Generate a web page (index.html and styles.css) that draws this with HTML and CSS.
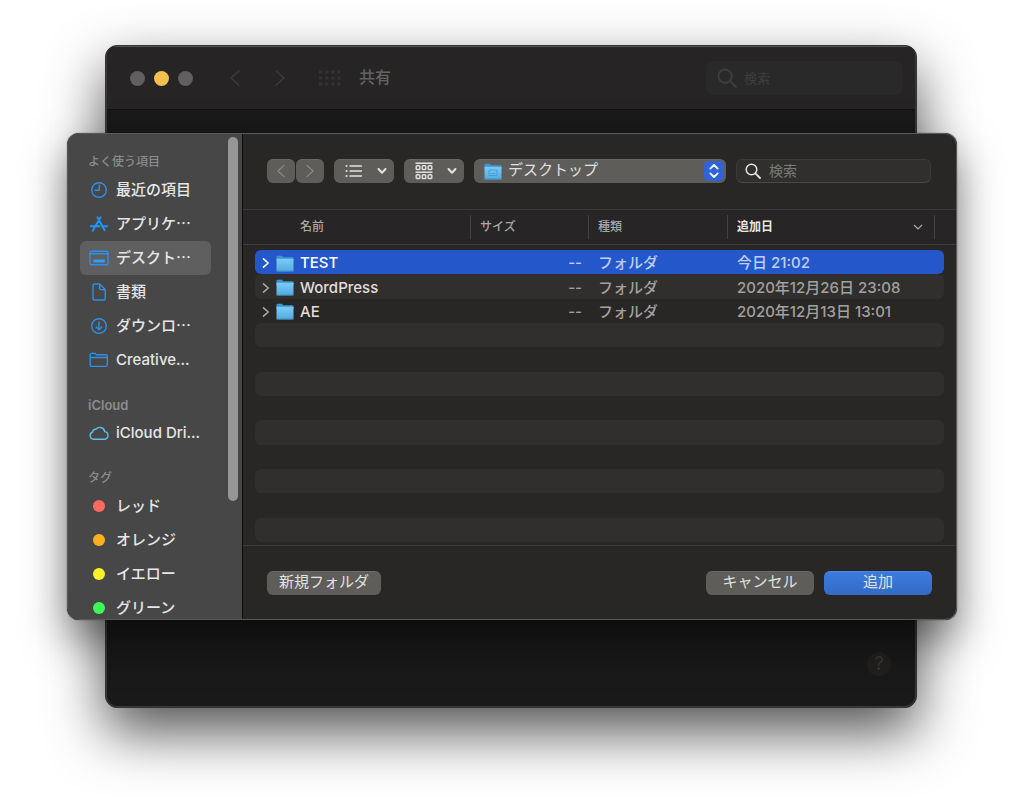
FILE: index.html
```html
<!DOCTYPE html>
<html lang="ja">
<head>
<meta charset="utf-8">
<meta name="viewport" content="width=device-width, initial-scale=1">
<title>共有</title>
<link rel="stylesheet" href="styles.css">
</head>
<body>
<svg class="defs" aria-hidden="true">
  <defs>
    <linearGradient id="folder-fill" x1="0" y1="0" x2="0" y2="1">
      <stop offset="0" stop-color="#7acbf8"/>
      <stop offset="1" stop-color="#54aadf"/>
    </linearGradient>
    <symbol id="folder" viewBox="0 0 18 17">
      <path d="M0.5 2a1.2 1.2 0 0 1 1.2-1.2h4.100l1.500 1.400h9a1.200 1.200 0 0 1 1.200 1.200V6H.5z" fill="#3c97cf"/>
      <path d="M.5 3.800h17v11.600a1 1 0 0 1-1 1h-15a1 1 0 0 1-1-1z" fill="url(#folder-fill)"/>
      <path d="M.6 15.900h16.800" stroke="#3d8fc4" stroke-width=".8"/>
    </symbol>
    <symbol id="search" viewBox="0 0 16 16">
      <circle cx="6.500" cy="6.500" r="5.300" fill="none" stroke="currentColor" stroke-width="1.500"/>
      <path d="M10.400 10.400l4.600 4.600" stroke="currentColor" stroke-width="1.800" stroke-linecap="round"/>
    </symbol>
    <symbol id="left" viewBox="0 0 10 16"><path d="M8.500 1.500L1.500 8l7 6.500" fill="none" stroke="currentColor" stroke-width="1.300" stroke-linecap="round" stroke-linejoin="round"/></symbol>
    <symbol id="right" viewBox="0 0 10 16"><path d="M1.500 1.500L8.500 8l-7 6.500" fill="none" stroke="currentColor" stroke-width="1.300" stroke-linecap="round" stroke-linejoin="round"/></symbol>
    <symbol id="disclose" viewBox="0 0 8 12"><path d="M1.500 1.800L6.200 6 1.500 10.200" fill="none" stroke="currentColor" stroke-width="1.600" stroke-linecap="round" stroke-linejoin="round"/></symbol>
    <symbol id="down" viewBox="0 0 10 8"><path d="M1.500 2L5 5.700 8.500 2" fill="none" stroke="currentColor" stroke-width="2" stroke-linecap="round" stroke-linejoin="round"/></symbol>
  </defs>
</svg>

<main class="window">
  <header class="titlebar">
    <div class="lights">
      <button class="light" aria-label="閉じる"></button>
      <button class="light light-min" aria-label="しまう"></button>
      <button class="light" aria-label="拡大"></button>
    </div>
    <button class="nav nav-back" aria-label="戻る"><svg width="12" height="18"><use href="#left"/></svg></button>
    <button class="nav nav-next" aria-label="進む"><svg width="12" height="18"><use href="#right"/></svg></button>
    <button class="nav nav-all" aria-label="すべてを表示">
      <svg width="22" height="16" viewBox="0 0 22 16" fill="none" stroke="currentColor" stroke-width="3" stroke-dasharray="3.400 2.700"><path d="M0 2h22M0 8h22M0 14h22"/></svg>
    </button>
    <h1 class="title">共有</h1>
    <label class="win-search">
      <svg width="20" height="20"><use href="#search"/></svg>
      <input type="search" placeholder="検索" aria-label="検索" disabled>
    </label>
  </header>
  <button class="help" aria-label="ヘルプ">?</button>
</main>

<section class="dialog" role="dialog" aria-label="フォルダを選択">
  <nav class="sidebar">
    <h2 class="group">よく使う項目</h2>
    <a class="item" href="#"><svg class="ico" viewBox="0 0 20 18"><circle cx="10" cy="9" r="7.300"/><path d="M10.300 4.300v4.900H6"/></svg>最近の項目</a>
    <a class="item" href="#"><svg class="ico ico-app" viewBox="0 0 20 18"><path d="M11.600 2.300L5 13.500M8.400 2.300l7.200 12.900M1.900 11.300h8.600M14.300 11.300h3.800M4.200 14.800l-.5.900"/></svg>アプリケ⋯</a>
    <a class="item item-on" href="#" aria-current="page"><svg class="ico" viewBox="0 0 20 18"><rect x="1" y="2.200" width="18" height="13.600" rx="1.500"/><path d="M1 4.700h18"/><rect class="solid" x="4.200" y="10.600" width="11.600" height="3" rx=".8"/></svg>デスクト⋯</a>
    <a class="item" href="#"><svg class="ico" viewBox="0 0 20 18"><path d="M5.500 1h5.200l5.500 5.500v9a1.500 1.500 0 0 1-1.500 1.500H5.500A1.500 1.500 0 0 1 4 15.500v-13A1.500 1.500 0 0 1 5.500 1zM10.600 1v4.600a1 1 0 0 0 1 1h4.600"/></svg>書類</a>
    <a class="item" href="#"><svg class="ico" viewBox="0 0 20 18"><circle cx="10" cy="9" r="7.300"/><path d="M10 5v7.500M7.200 9.900l2.800 2.800 2.800-2.800"/></svg>ダウンロ⋯</a>
    <a class="item" href="#"><svg class="ico" viewBox="0 0 20 18"><path d="M1.200 14V3.800a1.400 1.400 0 0 1 1.400-1.400h3.300l1.700 1.400h9.300a1.400 1.400 0 0 1 1.400 1.400V14a1.400 1.400 0 0 1-1.400 1.400H2.600A1.400 1.400 0 0 1 1.200 14zM1.200 6.500h17.100"/></svg>Creative...</a>
    <h2 class="group group-latin">iCloud</h2>
    <a class="item" href="#"><svg class="ico ico-cloud" viewBox="0 0 20 18"><path d="M4.600 15.200a3.700 3.700 0 0 1-.9-7.200 2.600 2.600 0 0 1 3.200-2.600 4.900 4.900 0 0 1 8.800 2.200 3.850 3.850 0 0 1 0 7.600z"/></svg>iCloud Dri...</a>
    <h2 class="group">タグ</h2>
    <a class="item" href="#"><span class="dot dot-red"></span>レッド</a>
    <a class="item" href="#"><span class="dot dot-orange"></span>オレンジ</a>
    <a class="item" href="#"><span class="dot dot-yellow"></span>イエロー</a>
    <a class="item" href="#"><span class="dot dot-green"></span>グリーン</a>
    <span class="thumb"></span>
  </nav>

  <div class="panel">
    <div class="toolbar">
      <div class="pair">
        <button class="btn btn-step" aria-label="戻る"><svg width="10" height="14"><use href="#left"/></svg></button>
        <button class="btn btn-step" aria-label="進む"><svg width="10" height="14"><use href="#right"/></svg></button>
      </div>
      <button class="btn btn-view" aria-label="リスト表示">
        <svg width="18" height="14" viewBox="0 0 18 14" stroke="currentColor" stroke-width="1.300" stroke-linecap="round"><path d="M5 2h11.500M5 7h11.500M5 12h11.500"/><path stroke-width="2" d="M1.500 2h.1M1.500 7h.1M1.500 12h.1"/></svg>
        <svg width="10" height="8"><use href="#down"/></svg>
      </button>
      <button class="btn btn-view" aria-label="グループ">
        <svg width="18" height="18" viewBox="0 0 18 18" fill="none" stroke="currentColor" stroke-width="1.400"><path d="M.5 1.200h17M.5 10.200h17"/><g><rect x="1.200" y="3.700" width="3.600" height="3.800" rx=".8"/><rect x="7.200" y="3.700" width="3.600" height="3.800" rx=".8"/><rect x="13.200" y="3.700" width="3.600" height="3.800" rx=".8"/><rect x="1.200" y="12.700" width="3.600" height="3.800" rx=".8"/><rect x="7.200" y="12.700" width="3.600" height="3.800" rx=".8"/><rect x="13.200" y="12.700" width="3.600" height="3.800" rx=".8"/></g></svg>
        <svg width="10" height="8"><use href="#down"/></svg>
      </button>
      <div class="path">
        <select class="btn path-select" aria-label="場所"><option>デスクトップ</option></select>
        <svg class="path-folder" width="18" height="17" viewBox="0 0 18 17"><use href="#folder"/><path d="M5 7h8v5.500H5z" fill="none" stroke="#4a9fd6"/><path d="M6.500 10.500h5" stroke="#4a9fd6"/></svg>
        <span class="path-knob"><svg width="12" height="16" viewBox="0 0 12 16" fill="none" stroke="#fff" stroke-width="1.800" stroke-linecap="round" stroke-linejoin="round"><path d="M2.300 5.600L6 2l3.700 3.600M2.300 10.400L6 14l3.700-3.600"/></svg></span>
      </div>
      <label class="search">
        <svg width="16" height="16"><use href="#search"/></svg>
        <input type="search" placeholder="検索" aria-label="検索">
      </label>
    </div>

    <div class="list">
      <table class="files">
        <colgroup><col><col class="c-size"><col class="c-kind"><col class="c-date"><col class="c-end"></colgroup>
        <thead>
          <tr><th class="h-name"><span>名前</span></th><th><span>サイズ</span></th><th><span>種類</span></th><th class="sorted"><span>追加日<svg width="10" height="8" viewBox="0 0 10 8"><path d="M1 2l4 4 4-4" fill="none" stroke="#aaa" stroke-width="1.200"/></svg></span></th><th></th></tr>
        </thead>
        <tbody>
          <tr class="gap"><td colspan="5"></td></tr>
          <tr class="row row-on"><td><span class="name"><svg width="8" height="12"><use href="#disclose"/></svg><svg width="18" height="17"><use href="#folder"/></svg>TEST</span></td><td class="size">--</td><td>フォルダ</td><td>今日 21:02</td><td></td></tr>
          <tr class="row stripe"><td><span class="name"><svg width="8" height="12"><use href="#disclose"/></svg><svg width="18" height="17"><use href="#folder"/></svg>WordPress</span></td><td class="size">--</td><td>フォルダ</td><td>2020年12月26日 23:08</td><td></td></tr>
          <tr class="row"><td><span class="name"><svg width="8" height="12"><use href="#disclose"/></svg><svg width="18" height="17"><use href="#folder"/></svg>AE</span></td><td class="size">--</td><td>フォルダ</td><td>2020年12月13日 13:01</td><td></td></tr>
          <tr class="row stripe"><td></td><td></td><td></td><td></td><td></td></tr>
          <tr class="row"><td></td><td></td><td></td><td></td><td></td></tr>
          <tr class="row stripe"><td></td><td></td><td></td><td></td><td></td></tr>
          <tr class="row"><td></td><td></td><td></td><td></td><td></td></tr>
          <tr class="row stripe"><td></td><td></td><td></td><td></td><td></td></tr>
          <tr class="row"><td></td><td></td><td></td><td></td><td></td></tr>
          <tr class="row stripe"><td></td><td></td><td></td><td></td><td></td></tr>
          <tr class="row"><td></td><td></td><td></td><td></td><td></td></tr>
          <tr class="row stripe"><td></td><td></td><td></td><td></td><td></td></tr>
        </tbody>
      </table>
    </div>

    <footer class="actions">
      <button class="btn btn-new">新規フォルダ</button>
      <button class="btn btn-wide">キャンセル</button>
      <button class="btn btn-wide btn-primary">追加</button>
    </footer>
  </div>
</section>
</body>
</html>
```
FILE: styles.css
```css
* { box-sizing: border-box; }
body {
  margin: 0;
  height: 100vh;
  display: grid;
  grid-template: minmax(0, 1fr) / minmax(0, 1fr);
  background: #fff;
  font: 15px/20px Inter, "Noto Sans CJK JP", sans-serif;
  color: #e2e2e1;
}
button, input, select { font: inherit; color: inherit; border: 0; padding: 0; margin: 0; background: none; outline: 0; }
svg { display: block; flex: none; }
.defs { position: absolute; width: 0; height: 0; }

.window, .dialog { grid-area: 1 / 1; overflow: hidden; border-radius: 12px; }
.window {
  margin: 45px 107px 89px 105px;
  display: flex;
  flex-direction: column;
  justify-content: space-between;
  background: #191919;
  border: 1px solid #333;
  box-shadow: inset 0 1px #555, inset 0 0 0 1px #3a3a3a, 0 24px 56px rgba(0, 0, 0, .68);
}
.titlebar {
  height: 63px;
  display: flex;
  align-items: center;
  padding: 0 12px 0 23px;
  margin: 1px 1px 0;
  background: #262424;
  border-bottom: 1px solid #101010;
}
.lights { display: flex; gap: 9px; margin-right: 36px; }
.light { width: 15px; height: 15px; border-radius: 50%; background: #615f60; }
.light-min { background: #f5bf4f; }
.nav { color: #3c3a3a; }
.nav-back { margin-right: 33px; }
.nav-next { margin-right: 33px; }
.nav-all { color: #343232; margin-right: 18px; }
.title { margin: 0; flex: 1; font-size: 16px; line-height: 20px; padding-bottom: 2px; font-weight: 500; color: #656363; }
.win-search {
  width: 197px; height: 34px;
  display: flex; align-items: center; gap: 7px;
  padding: 0 11px;
  border-radius: 7px;
  background: #292929;
  color: #3e3e3e;
}
.win-search input { min-width: 0; flex: 1; font-size: 13px; }
input::placeholder { color: inherit; opacity: 1; }
.help {
  align-self: flex-end;
  width: 24px; height: 24px;
  margin: 0 25px 31px 0;
  border-radius: 50%;
  background: #21201e;
  color: #383838;
  font-size: 18px;
}

.dialog {
  z-index: 1;
  margin: 133px 67px 177px;
  display: grid;
  grid-template: minmax(0, 1fr) / 175px minmax(0, 1fr);
  background: #282725;
  border: 1px solid #5a5a59;
  box-shadow: 0 0 1px #000, 0 20px 44px rgba(0, 0, 0, .5);
}
.sidebar {
  position: relative;
  overflow: hidden;
  padding: 15px 31px 0 12px;
  background: #474747;
  border-right: 1px solid #0c0c0c;
}
.group { margin: 0; height: 24px; padding: 1px 0 0 8px; font-size: 12px; line-height: 24px; font-weight: 500; color: #8c8c8c; }
.group-latin { font-size: 13px; font-weight: 600; }
.item + .group { margin-top: 15px; }
.item {
  height: 34px;
  display: flex;
  align-items: center;
  gap: 7px;
  padding-left: 9px;
  border-radius: 6px;
  color: #e6e6e6;
  font-weight: 500;
  text-decoration: none;
  white-space: nowrap;
}
.item-on { background: #5f5f5f; }
.ico { width: 20px; height: 18px; fill: none; stroke: #2f8fe8; stroke-width: 1.4; stroke-linecap: round; stroke-linejoin: round; }
.ico .solid { fill: #2f9cf5; stroke: none; }
.ico-app { stroke: #1f95ff; stroke-width: 2; }
.ico-cloud { stroke: #5bc0ea; }
.dot { width: 12px; height: 12px; margin: 0 4px; border-radius: 50%; }
.dot-red { background: #ff6a60; }
.dot-orange { background: #ffb01f; }
.dot-yellow { background: #fff02a; }
.dot-green { background: #3dfb57; }
.thumb { position: absolute; top: 3px; right: 4px; width: 10px; height: 75%; border-radius: 5px; background: #969696; }

.panel { display: flex; flex-direction: column; min-width: 0; }
.toolbar { height: 75px; display: flex; align-items: center; gap: 10px; padding: 0 25px 2px 24px; flex: none; }
.btn { height: 24px; border-radius: 6px; background: #5e5d5a; box-shadow: inset 0 1px rgba(255, 255, 255, .08); font-size: 15px; line-height: 22px; padding-bottom: 2px; }
.pair { display: flex; gap: 1px; }
.btn-step { width: 28px; padding: 0; display: grid; place-items: center; color: #8d8c8a; }
.btn-view { width: 60px; display: flex; align-items: center; justify-content: space-between; padding: 0 7px 0 11px; }
.path { position: relative; flex: 1; display: flex; }
.path-select { flex: 1; width: 100%; appearance: none; padding: 0 30px 2px 34px; }
.path-folder { position: absolute; left: 10px; top: 4px; pointer-events: none; }
.path-knob { position: absolute; right: 2px; top: 2px; width: 20px; height: 20px; display: grid; place-items: center; border-radius: 5px; background: #2f64d8; pointer-events: none; }
.search {
  width: 195px; height: 24px;
  display: flex; align-items: center; gap: 8px;
  padding: 0 8px;
  border-radius: 6px;
  background: #302f2d;
  border: 1px solid #3c3b39;
  border-bottom-color: #4a4947;
}
.search input { min-width: 0; flex: 1; font-size: 14px; color: #7c7b7a; }

.list { flex: 1; min-height: 0; border: solid #3b3a38; border-width: 1px 0; padding-bottom: 3px; }
.files { width: 100%; height: 100%; table-layout: fixed; border-collapse: separate; border-spacing: 0; }
.c-size { width: 118px; }
.c-kind { width: 139px; }
.c-date { width: 207px; }
.c-end { width: 21px; }
th { height: 35px; padding: 5px 0; background: #272526; border-bottom: 1px solid #3f3d3d; text-align: left; font-size: 12px; font-weight: 500; color: #a9a8a7; }
th span { height: 24px; display: flex; align-items: center; justify-content: space-between; padding: 0 11px 0 9px; border-right: 1px solid #434141; }
.h-name span { padding-left: 57px; }
.sorted { color: #e6e6e6; font-weight: 700; }
td { padding: 0 9px; white-space: nowrap; color: #a2a19f; font-weight: 500; }
.gap td { height: 5px; }
.row td { height: 24px; line-height: 20px; padding-top: 2px; background-clip: padding-box; }
.row td:first-child { padding: 2px 0 0 7px; border-left: 12px solid transparent; border-radius: 18px 0 0 18px / 6px 0 0 6px; color: #e0dfde; }
.row td:last-child { padding: 0; border-right: 12px solid transparent; border-radius: 0 18px 18px 0 / 0 6px 6px 0; }
.stripe td { background-color: #302f2d; }
.row-on td { background-color: #2458ca; color: #c0cff1; }
.row-on td:first-child { color: #fff; }
.row .size { text-align: right; padding-right: 7px; }
.name { display: flex; align-items: center; gap: 6px; }
.name svg:first-child { color: #a8a7a6; }
.row-on .name svg:first-child { color: #fff; }

.actions { height: 73px; flex: none; display: flex; align-items: center; gap: 10px; padding: 0 24px; }
.btn-new { padding: 0 12px 2px; margin-right: auto; }
.btn-wide { width: 108px; }
.btn-primary { background: linear-gradient(#3c7ce0, #336bc6); }
```
